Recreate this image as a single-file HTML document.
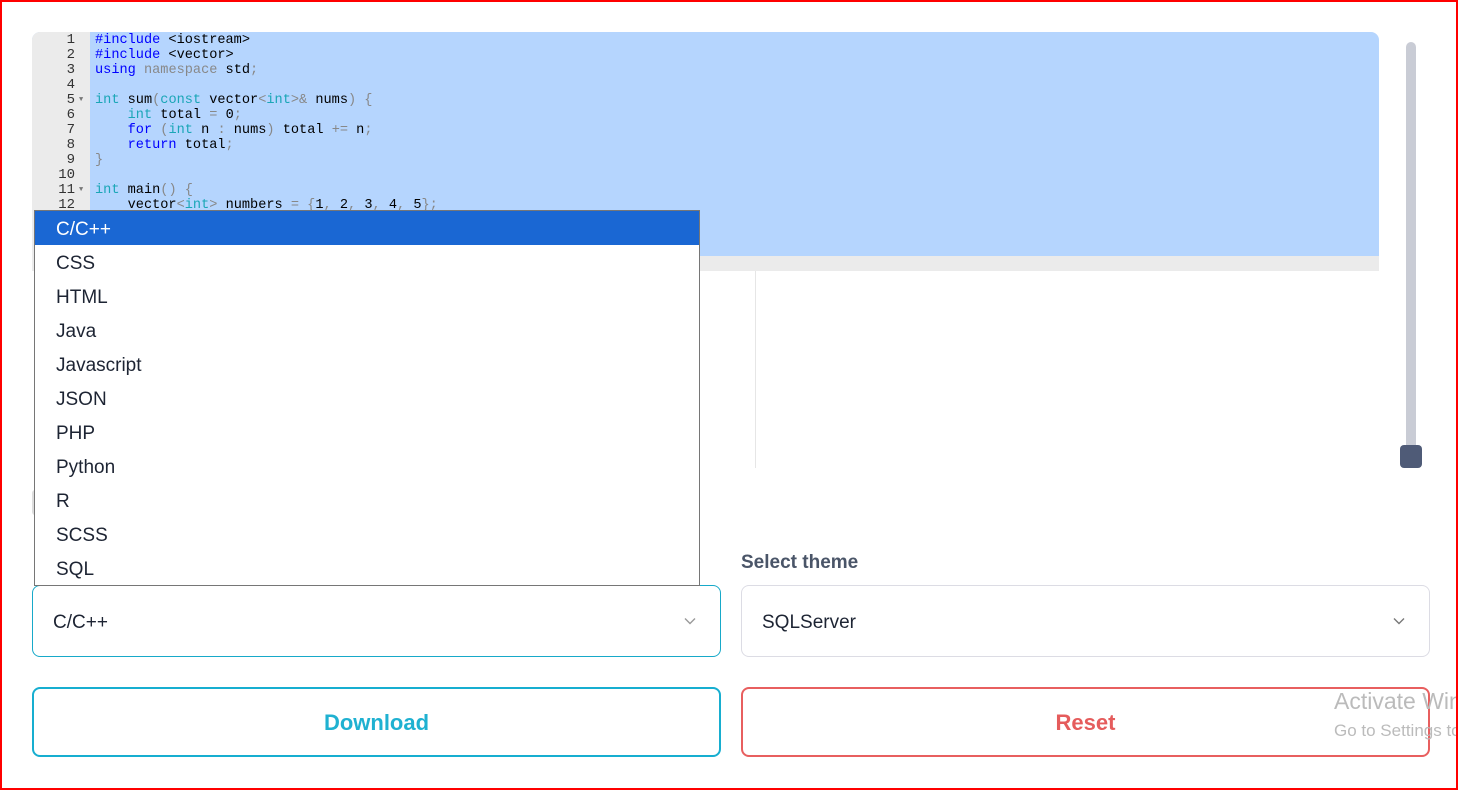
<!DOCTYPE html>
<html><head><meta charset="utf-8"><style>
*{box-sizing:border-box;margin:0;padding:0}
html,body{width:1460px;height:791px;overflow:hidden}
body{background:#fff;position:relative;font-family:"Liberation Sans",sans-serif}
.frame{position:absolute;left:0;top:0;width:1458px;height:790px;border:2px solid #f00}
.ed{position:absolute;left:32px;top:32px;width:1347px;height:239px;background:#b5d5fe;border-radius:8px 8px 0 0;overflow:hidden}
.gut{position:absolute;left:0;top:0;width:58px;height:239px;background:#ebebeb}
.hs{position:absolute;left:0;top:224px;width:1347px;height:15px;background:#ebebeb}
.code{position:absolute;left:0;top:1px;font-family:"Liberation Mono",monospace;font-size:13.6px;line-height:15px;white-space:pre}
.ln{position:absolute;left:0;width:43px;text-align:right;color:#333;font-size:14px}
.fold{position:absolute;left:47px;font-size:7px;color:#777}
.tx{position:absolute;left:63px;color:#000}
.k{color:#00f}.t{color:#1aa6b7}.p{color:#888}.g{color:#888}
.margin{position:absolute;left:755px;top:271px;width:1px;height:197px;background:#e6e6e6}
.track{position:absolute;left:1406px;top:42px;width:10px;height:420px;background:#c9ccd5;border-radius:5px}
.thumb{position:absolute;left:1400px;top:445px;width:22px;height:23px;background:#4f5b77;border-radius:4px}
.dd{position:absolute;left:34px;top:210px;width:666px;height:376px;background:#fff;border:1px solid #767676}
.dd div{height:34px;line-height:37px;padding-left:21px;font-size:19px;color:#1d2433}
.dd .sel{background:#1a67d3;color:#fff}
.lbl{position:absolute;top:552px;font-size:19px;color:#4a5568;font-weight:bold}
.sb{position:absolute;top:585px;width:689px;height:72px;border:1px solid #17a9c9;border-radius:8px;font-size:19px;color:#1d2433;line-height:73px;padding-left:20px}
.sb svg{position:absolute;right:24px;top:31px}
.btn{position:absolute;top:687px;width:689px;height:70px;border:2px solid #17aed0;border-radius:8px;text-align:center;line-height:68px;font-size:22px;font-weight:bold;color:#1fb1d1}
.gray{position:absolute;left:32px;top:490px;width:6px;height:25px;background:#ddd;border-radius:3px 0 0 3px}
.clip{position:absolute;left:1300px;top:680px;width:156px;height:70px;overflow:hidden}
.act{position:absolute;left:34px;top:8px;font-size:23px;color:#bbb;white-space:nowrap}
.act2{position:absolute;left:34px;top:41px;font-size:17px;color:#bbb;white-space:nowrap}
</style></head><body>
<div class="frame"></div>
<div class="ed">
<div class="gut"></div>
<div class="hs"></div>
<div class="code">
<span class="ln" style="top:0">1</span><span class="tx" style="top:0"><span class="k">#include</span> &lt;iostream&gt;</span>
<span class="ln" style="top:15px">2</span><span class="tx" style="top:15px"><span class="k">#include</span> &lt;vector&gt;</span>
<span class="ln" style="top:30px">3</span><span class="tx" style="top:30px"><span class="k">using</span> <span class="g">namespace</span> std<span class="p">;</span></span>
<span class="ln" style="top:45px">4</span>
<span class="ln" style="top:60px">5</span><span class="fold" style="top:60px">▼</span><span class="tx" style="top:60px"><span class="t">int</span> sum<span class="p">(</span><span class="t">const</span> vector<span class="p">&lt;</span><span class="t">int</span><span class="p">&gt;&amp;</span> nums<span class="p">) {</span></span>
<span class="ln" style="top:75px">6</span><span class="tx" style="top:75px">    <span class="t">int</span> total <span class="p">=</span> 0<span class="p">;</span></span>
<span class="ln" style="top:90px">7</span><span class="tx" style="top:90px">    <span class="k">for</span> <span class="p">(</span><span class="t">int</span> n <span class="p">:</span> nums<span class="p">)</span> total <span class="p">+=</span> n<span class="p">;</span></span>
<span class="ln" style="top:105px">8</span><span class="tx" style="top:105px">    <span class="k">return</span> total<span class="p">;</span></span>
<span class="ln" style="top:120px">9</span><span class="tx" style="top:120px"><span class="p">}</span></span>
<span class="ln" style="top:135px">10</span>
<span class="ln" style="top:150px">11</span><span class="fold" style="top:150px">▼</span><span class="tx" style="top:150px"><span class="t">int</span> main<span class="p">() {</span></span>
<span class="ln" style="top:165px">12</span><span class="tx" style="top:165px">    vector<span class="p">&lt;</span><span class="t">int</span><span class="p">&gt;</span> numbers <span class="p">= {</span>1<span class="p">,</span> 2<span class="p">,</span> 3<span class="p">,</span> 4<span class="p">,</span> 5<span class="p">};</span></span>
</div>
</div>
<div class="margin"></div>
<div class="track"></div>
<div class="thumb"></div>
<div class="gray"></div>
<div class="lbl" style="left:741px">Select theme</div>
<div class="sb" style="left:32px">C/C++<svg width="12" height="8" viewBox="0 0 12 8"><path d="M1 1.5 6 6.5 11 1.5" fill="none" stroke="#999" stroke-width="1.4"/></svg></div>
<div class="sb" style="left:741px;border-color:#dcdce4">SQLServer<svg width="12" height="8" viewBox="0 0 12 8"><path d="M1 1.5 6 6.5 11 1.5" fill="none" stroke="#777" stroke-width="1.4"/></svg></div>
<div class="btn" style="left:32px">Download</div>
<div class="btn" style="left:741px;border-color:#e85f5f;color:#e55c5c">Reset</div>
<div class="clip"><div class="act">Activate Windows</div><div class="act2">Go to Settings to activate Windows.</div></div>
<div class="dd">
<div class="sel">C/C++</div><div>CSS</div><div>HTML</div><div>Java</div><div>Javascript</div><div>JSON</div><div>PHP</div><div>Python</div><div>R</div><div>SCSS</div><div>SQL</div>
</div>
</body></html>
